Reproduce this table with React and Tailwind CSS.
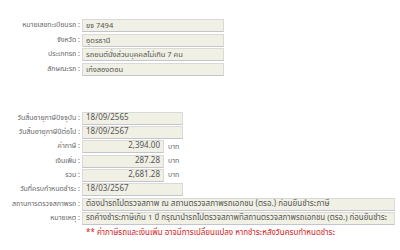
const font = { fontFamily: "Tahoma, 'Noto Sans Thai', 'Noto Sans', 'DejaVu Sans', sans-serif" }

const vehicle = [
  ["หมายเลขทะเบียนรถ", "ขจ 7494"],
  ["จังหวัด", "อุดรธานี"],
  ["ประเภทรถ", "รถยนต์นั่งส่วนบุคคลไม่เกิน 7 คน"],
  ["ลักษณะรถ", "เก๋งสองตอน"],
]

function Label({ children }) {
  return (
    <div className="w-[82px] shrink-0 text-right pr-[2px] text-[7px] leading-[13px] text-[#666] whitespace-nowrap">
      {children} :
    </div>
  )
}

function Box({ children, className = "" }) {
  return (
    <div
      className={
        "h-[13px] border border-[#d9d9d9] border-b-[#c4c4ce] bg-[#f0f0e4] px-[3px] text-[7.5px] leading-[11px] text-[#555] whitespace-nowrap overflow-hidden " +
        className
      }
    >
      {children}
    </div>
  )
}

export default function App() {
  return (
    <div className="w-[400px] h-[250px] bg-white overflow-hidden" style={font}>
      <div className="pt-[19px] flex flex-col gap-[1.5px]">
        {vehicle.map(([k, v]) => (
          <div key={k} className="flex items-center">
            <Label>{k}</Label>
            <Box className="w-[142px]">{v}</Box>
          </div>
        ))}
      </div>

      <div className="pt-[36px] flex flex-col gap-[1.4px]">
        <div className="flex items-center">
          <Label>วันสิ้นอายุภาษีปัจจุบัน</Label>
          <Box className="w-[101px] text-[8px]">18/09/2565</Box>
        </div>
        <div className="flex items-center">
          <Label>วันสิ้นอายุภาษีปีต่อไป</Label>
          <Box className="w-[101px] text-[8px]">18/09/2567</Box>
        </div>
        {[
          ["ค่าภาษี", "2,394.00"],
          ["เงินเพิ่ม", "287.28"],
          ["รวม", "2,681.28"],
        ].map(([k, v]) => (
          <div key={k} className="flex items-center">
            <Label>{k}</Label>
            <Box className="w-[82px] text-right text-[8px]">{v}</Box>
            <span className="ml-[4px] text-[7px] text-[#666]">บาท</span>
          </div>
        ))}
        <div className="flex items-center">
          <Label>วันที่ครบกำหนดชำระ</Label>
          <Box className="w-[101px] text-[8px]">18/03/2567</Box>
        </div>
        <div className="flex items-center">
          <Label>สถานการตรวจสภาพรถ</Label>
          <Box className="w-[313px] text-[8px]">
            ต้องนำรถไปตรวจสภาพ ณ สถานตรวจสภาพรถเอกชน (ตรอ.) ก่อนยื่นชำระภาษี
          </Box>
        </div>
        <div className="flex items-center">
          <Label>หมายเหตุ</Label>
          <Box className="w-[313px] text-[7.9px]">
            รถค้างชำระภาษีเกิน 1 ปี กรุณานำรถไปตรวจสภาพที่สถานตรวจสภาพรถเอกชน (ตรอ.) ก่อนยื่นชำระ
          </Box>
        </div>
        <div className="flex items-center">
          <div className="w-[86px] shrink-0" />
          <span className="text-[8px] leading-[13px] text-[#d42020] whitespace-nowrap">
            ** ค่าภาษีรถและเงินเพิ่ม อาจมีการเปลี่ยนแปลง หากชำระหลังวันครบกำหนดชำระ
          </span>
        </div>
      </div>
    </div>
  )
}
